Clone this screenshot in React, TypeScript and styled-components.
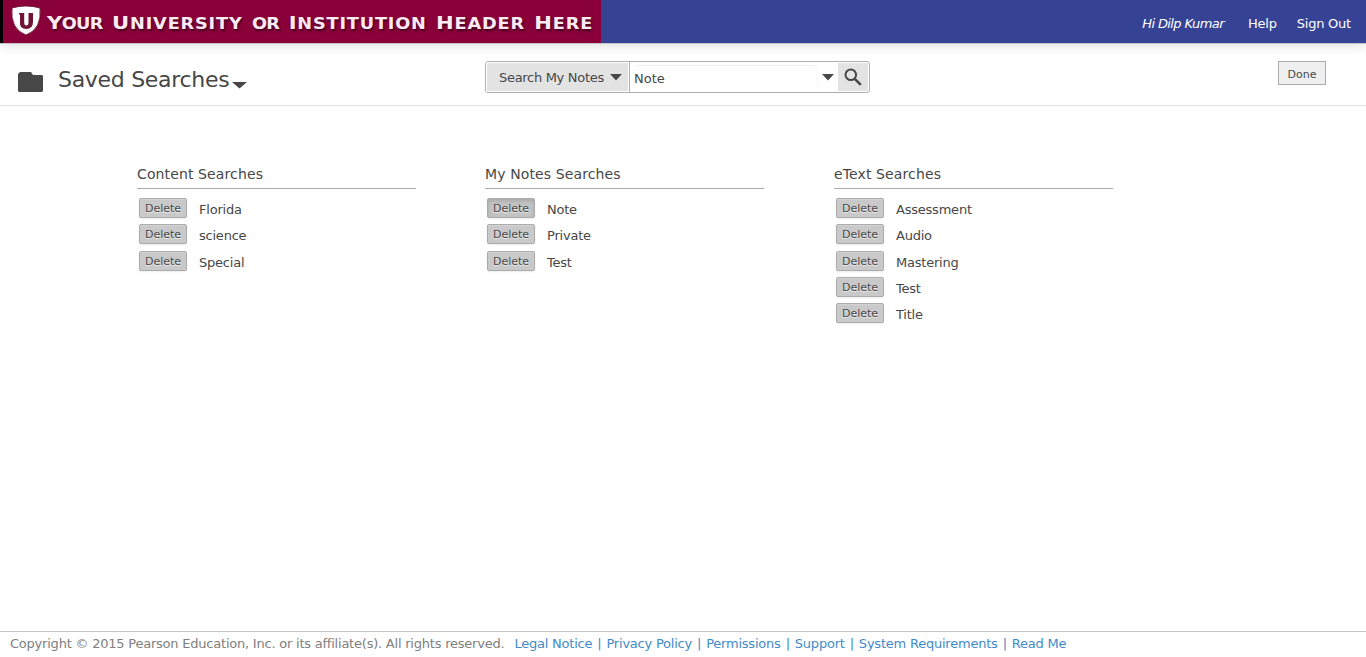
import React from "react";
import styled, { createGlobalStyle } from "styled-components";

const Global = createGlobalStyle`
  * { box-sizing: border-box; }
  body {
    margin: 0;
    background: #fff;
    color: #474747;
    font-family: Verdana, "DejaVu Sans", sans-serif;
    font-size: 13px;
    letter-spacing: -0.22px;
    overflow: hidden;
  }
`;

const Page = styled.div`
  height: 657px;
  display: flex;
  flex-direction: column;
`;

const Header = styled.header`
  flex: none;
  height: 44px;
  display: flex;
  justify-content: space-between;
  background: #364395;
  border-bottom: 1px solid #c4c4c8;
  box-shadow: 0 2px 10px rgba(0, 0, 0, 0.12);
`;

const Banner = styled.div`
  width: 601px;
  height: 43px;
  display: flex;
  align-items: flex-start;
  padding: 5px 0 0 8px;
  background: #8a0039;
  border-left: 3px solid #000;
`;

const BannerTitle = styled.div`
  display: flex;
  align-items: baseline;
  gap: 8.2px;
  margin: 5px 0 0 6px;
  color: #fbeaf3;
  font: bold 15.5px/26px "DejaVu Sans", sans-serif;
  text-transform: uppercase;
  text-shadow: 1px 2px 2px rgba(45, 0, 25, 0.75);
  transform: scaleX(1.144);
  transform-origin: left;
`;

const Word = styled.span<{ $tight?: boolean; $small?: boolean }>`
  display: block;
  white-space: nowrap;
  letter-spacing: ${(p) => (p.$tight ? "-0.6px" : "0.7px")};
  &::first-letter { font-size: ${(p) => (p.$small ? "15.5px" : "18.5px")}; }
`;

const UserLinks = styled.nav`
  display: flex;
  padding: 15px 15px 0 0;
  line-height: 17px;
  color: #fff;
`;

const Greeting = styled.em`
  margin-right: 24px;
  letter-spacing: -0.6px;
`;

const HeaderLink = styled.a`
  & + & { margin-left: 20px; }
`;

const Toolbar = styled.div`
  flex: none;
  height: 62px;
  display: flex;
  align-items: flex-start;
  border-bottom: 1px solid #e2e2e2;
`;

const PageTitle = styled.div`
  width: 485px;
  display: flex;
  padding: 20px 0 0 18px;
`;

const FolderIcon = styled.svg`
  margin-top: 8px;
`;

const Title = styled.h1`
  margin: 1px 3px 0 15px;
  font-size: 22px;
  font-weight: normal;
  letter-spacing: -0.3px;
  line-height: 30px;
`;

const Caret = styled.svg<{ $top?: number }>`
  flex: none;
  margin-top: ${(p) => p.$top ?? 0}px;
`;

const SearchBox = styled.div`
  width: 385px;
  height: 32px;
  margin-top: 17px;
  display: flex;
  border: 1px solid #b0b0b0;
  border-radius: 3px;
`;

const Scope = styled.div`
  width: 143px;
  display: flex;
  align-items: center;
  justify-content: space-between;
  padding: 0 6px 0 12px;
  background: #e3e3e3;
  border: 1px solid #fff;
  border-radius: 2px;
  letter-spacing: -0.3px;
`;

const Query = styled.div`
  flex: 1;
  display: flex;
  align-items: center;
  border-left: 1px solid #b0b0b0;
  padding: 0 4px 0 4px;
`;

const QueryText = styled.div`
  flex: 1;
  height: 24px;
  line-height: 25px;
  letter-spacing: 0;
  border-top: 1px solid #f0f0f0;
  border-right: 1px solid #fafafa;
  border-radius: 3px;
  margin-right: 4px;
`;

const SearchButton = styled.div`
  width: 30px;
  margin: 1px 1px 1px 0;
  padding-right: 1px;
  display: flex;
  align-items: center;
  justify-content: center;
  background: #e3e3e3;
`;

const Done = styled.button`
  width: 48px;
  height: 24px;
  margin: 17px 40px 0 auto;
  padding: 3px 0 0;
  border: 1px solid #ababab;
  background: #efefef;
  color: #474747;
  font: 11px/19px Verdana, "DejaVu Sans", sans-serif;
`;

const Content = styled.main`
  flex: 1;
  display: grid;
  grid-template-columns: 348px 349px 279px;
  padding: 58px 0 0 137px;
`;

const Column = styled.section`
  width: 279px;
`;

const ColumnTitle = styled.h2`
  height: 25px;
  margin: 0 0 9px;
  border-bottom: 1px solid #ababab;
  font-size: 14px;
  font-weight: normal;
  letter-spacing: 0.12px;
  line-height: 20px;
`;

const Row = styled.div`
  height: 26.25px;
  display: flex;
  align-items: flex-start;
  padding-left: 2px;
  line-height: 24px;
`;

const Delete = styled.button<{ $pressed?: boolean }>`
  width: 48px;
  height: 20px;
  margin: 0 12px 0 0;
  padding: 0;
  border: 1px solid #acacac;
  border-radius: 2px;
  background: ${(p) => (p.$pressed ? "#c4c4c4" : "#c9c9c9")};
  box-shadow: ${(p) =>
    p.$pressed
      ? "inset 0 2px 4px rgba(0, 0, 0, 0.15), 0 1px 2px rgba(0, 0, 0, 0.08)"
      : "inset 0 1px 0 rgba(255, 255, 255, 0.2), 0 1px 2px rgba(0, 0, 0, 0.08)"};
  color: #474747;
  font: 11px/19px Verdana, "DejaVu Sans", sans-serif;
  letter-spacing: 0;
  text-shadow: 0 1px 1px rgba(255, 255, 255, 0.75);
`;

const Footer = styled.footer`
  flex: none;
  height: 26px;
  display: flex;
  padding: 3px 0 0 10px;
  border-top: 1px solid #c6c6c6;
  color: #808080;
  line-height: 18px;
  white-space: nowrap;
`;

const Copyright = styled.span`
  margin-right: 10px;
`;

const FooterLink = styled.a`
  color: #428bca;
  & + &::before {
    content: "|";
    margin: 0 5px;
  }
`;

const ArrowDown = ({ top, width = 12 }: { top?: number; width?: number }) => (
  <Caret $top={top} width={width} height="7" viewBox="0 0 12 7" preserveAspectRatio="none">
    <path d="M0 0H12L6 6.5Z" fill="#474747" />
  </Caret>
);

const Shield = () => (
  <svg width="30" height="31" viewBox="0 0 30 31">
    <path d="M1 3Q15 -1 29 3Q31 24 15 30Q-1 24 1 3Z" fill="#fff" stroke="#5f0a2b" strokeWidth=".8" />
    <path d="M8 8H13.2V17Q13.2 20.5 15.3 20.5T17.5 17V8H22V17Q22 24 15.2 24T9 17.5V9.5H8Z" fill="#711538" />
  </svg>
);

const words = ["Your", "University", "or", "Institution", "Header", "Here"];

const groups = [
  { title: "Content Searches", items: ["Florida", "science", "Special"] },
  { title: "My Notes Searches", items: ["Note", "Private", "Test"], pressed: "Note" },
  { title: "eText Searches", items: ["Assessment", "Audio", "Mastering", "Test", "Title"] },
];

const footerLinks = ["Legal Notice", "Privacy Policy", "Permissions", "Support", "System Requirements", "Read Me"];

export default function App() {
  return (
    <Page>
      <Global />
      <Header>
        <Banner>
          <Shield />
          <BannerTitle>
            {words.map((w) => (
              <Word key={w} $tight={w === "Your" || w === "or"} $small={w === "or"}>{w}</Word>
            ))}
          </BannerTitle>
        </Banner>
        <UserLinks>
          <Greeting>Hi Dilp Kumar</Greeting>
          <HeaderLink>Help</HeaderLink>
          <HeaderLink>Sign Out</HeaderLink>
        </UserLinks>
      </Header>
      <Toolbar>
        <PageTitle>
          <FolderIcon width="25" height="20" viewBox="0 0 25 20">
            <path d="M0 2L2 0H13L15 3H24L25 4V19L24 20H1L0 19Z" fill="#474747" />
          </FolderIcon>
          <Title>Saved Searches</Title>
          <ArrowDown top={18} width={15} />
        </PageTitle>
        <SearchBox>
          <Scope>
            Search My Notes
            <ArrowDown />
          </Scope>
          <Query>
            <QueryText>Note</QueryText>
            <ArrowDown />
          </Query>
          <SearchButton>
            <svg width="18" height="18" viewBox="0 0 18 18" fill="none" stroke="#474747">
              <circle cx="6.8" cy="6.8" r="5.3" strokeWidth="2" />
              <path d="M10.8 10.8L16.8 16.8" strokeWidth="2.6" />
            </svg>
          </SearchButton>
        </SearchBox>
        <Done>Done</Done>
      </Toolbar>
      <Content>
        {groups.map((g) => (
          <Column key={g.title}>
            <ColumnTitle>{g.title}</ColumnTitle>
            {g.items.map((item) => (
              <Row key={item}>
                <Delete $pressed={g.pressed === item}>Delete</Delete>
                {item}
              </Row>
            ))}
          </Column>
        ))}
      </Content>
      <Footer>
        <Copyright>Copyright © 2015 Pearson Education, Inc. or its affiliate(s). All rights reserved.</Copyright>
        {footerLinks.map((l) => (
          <FooterLink key={l}>{l}</FooterLink>
        ))}
      </Footer>
    </Page>
  );
}
